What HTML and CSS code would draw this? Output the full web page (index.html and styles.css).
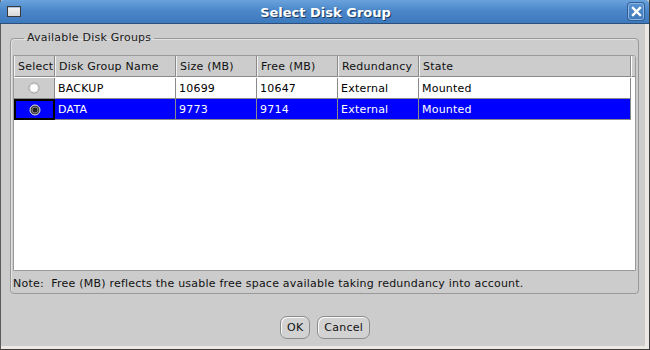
FILE: index.html
```html
<!DOCTYPE html>
<html lang="en">
<head>
  <meta charset="UTF-8">
  <title>Select Disk Group</title>
  <link rel="stylesheet" href="styles.css">
</head>
<body>

  <div class="window">
    <!-- title bar -->
    <div class="titlebar">
      <span class="win-icon"></span>
      <span class="title">Select Disk Group</span>
      <span class="close">
        <svg width="11" height="11" viewBox="0 0 11 11">
          <path d="M2 2 L9 9 M9 2 L2 9" stroke="#fff" stroke-width="2.4" stroke-linecap="square"/>
        </svg>
      </span>
    </div>

    <div class="content">
      <fieldset class="group">
        <legend>Available Disk Groups</legend>

        <div class="scroll">
          <div class="header">
            <table class="grid">
              <tr>
                <th class="c-sel">Select</th>
                <th class="c-name">Disk Group Name</th>
                <th class="c-num">Size (MB)</th>
                <th class="c-num">Free (MB)</th>
                <th class="c-num">Redundancy</th>
                <th class="c-state">State</th>
              </tr>
            </table>
            <div class="corner"></div>
          </div>
          <table class="grid rows">
            <tr>
              <td class="c-sel radio-cell">
                <svg width="12" height="12" viewBox="0 0 12 12">
                  <circle cx="6" cy="6" r="5" fill="#fff" stroke="#9a9a9a" stroke-width="1"/>
                  <circle cx="6" cy="6" r="4" fill="none" stroke="#e6e6e6" stroke-width="1"/>
                </svg>
              </td>
              <td class="c-name">BACKUP</td>
              <td class="c-num">10699</td>
              <td class="c-num">10647</td>
              <td class="c-num">External</td>
              <td class="c-state">Mounted</td>
            </tr>
            <tr class="selected">
              <td class="c-sel radio-cell focus">
                <svg width="12" height="12" viewBox="0 0 12 12">
                  <circle cx="6" cy="6" r="5" fill="#3a3a3a" stroke="#e8e8e8" stroke-width="1"/>
                  <circle cx="6" cy="6" r="3" fill="#222" stroke="#888" stroke-width="1"/>
                </svg>
              </td>
              <td class="c-name">DATA</td>
              <td class="c-num">9773</td>
              <td class="c-num">9714</td>
              <td class="c-num">External</td>
              <td class="c-state">Mounted</td>
            </tr>
          </table>
        </div>

        <div class="note">Note:&nbsp; Free (MB) reflects the usable free space available taking redundancy into account.</div>
      </fieldset>

      <div class="buttons">
        <button class="btn">OK</button>
        <button class="btn">Cancel</button>
      </div>
    </div>
  </div>

</body>
</html>
```

FILE: styles.css
```css
html, body {
  margin: 0;
  padding: 0;
  width: 650px;
  height: 350px;
  overflow: hidden;
  background: #cccccc;
  font-family: 'DejaVu Sans', sans-serif;
  font-size: 11px;
  letter-spacing: 0.22px;
  color: #000;
}

.window {
  width: 650px;
  height: 350px;
  box-sizing: border-box;
  display: flex;
  flex-direction: column;
  border-right: 1px solid #3c3c3c;
  border-bottom: 1px solid #3c3c3c;
  border-left: 1px solid #5a5a5a;
}

/* title bar */
.titlebar {
  height: 23px;
  flex: none;
  display: flex;
  align-items: center;
  position: relative;
  background: linear-gradient(to bottom, #6aa2dc 0%, #4b87c9 45%, #3d79bd 100%);
  border-bottom: 1px solid #2c4f7c;
  border-radius: 4px 4px 0 0;
  margin-left: -1px;
}

.win-icon {
  width: 12px;
  height: 9px;
  margin-left: 7px;
  background: linear-gradient(to bottom, #f4f4f4, #d8d8d8);
  border: 1px solid #3a3a3a;
  box-shadow: inset 0 1px 0 #a9c4e4;
}

.title {
  flex: 1;
  text-align: center;
  color: #fff;
  font-weight: bold;
  font-size: 13px;
  letter-spacing: 0;
  text-shadow: 1px 1px 0 #1f3b5e;
  padding-left: 2px;
  margin-top: 1px;
}

.close {
  width: 14px;
  height: 15px;
  margin-right: 5px;
  display: flex;
  align-items: center;
  justify-content: center;
  border: 1px solid #8fb4dd;
  border-radius: 3px;
  background: linear-gradient(to bottom, #5690cf, #3f79ba);
  box-shadow: 0 0 0 1px #2f5f98;
}

/* dialog content */
.content {
  flex: 1;
  display: flex;
  flex-direction: column;
  border-right: 4px solid #ece9e4;
  border-bottom: 3px solid #ece9e4;
}

.group {
  margin: 7px 6px 0 9px;
  padding: 10px 2px 2px 2px;
  border: 1px solid #999;
  border-radius: 4px;
  box-shadow: inset 1px 1px 0 #e2e2e2;
}

.group legend {
  padding: 0 3px;
  margin-left: 11px;
  line-height: 14px;
  color: #1a1a1a;
}

.scroll {
  height: 214px;
  background: #fff;
  border: 1px solid #9a9a9a;
  border-radius: 0 3px 0 0;
}

.header {
  display: flex;
  background: #cccccc;
}

.corner {
  flex: 1;
  border-bottom: 1px solid #8a8a8a;
  border-left: 1px solid #fff;
}

.grid {
  border-collapse: separate;
  border-spacing: 0;
  table-layout: fixed;
  width: 617px;
}

.grid th,
.grid td {
  box-sizing: border-box;
  height: 21px;
  padding: 0 0 0 3px;
  text-align: left;
  font-weight: normal;
  white-space: nowrap;
  overflow: hidden;
  border-right: 1px solid #8a8a8a;
  border-bottom: 1px solid #8a8a8a;
}

.grid th {
  background: #cccccc;
  border-left: 1px solid #f2f2f2;
  color: #111;
}

.c-sel { width: 41px; }
.c-name { width: 121px; }
.c-num { width: 81px; }
.c-state { width: 212px; }

.rows {
  margin-top: 1px;
}

.rows td {
  background: #fff;
}

.rows .radio-cell {
  background: #cccccc;
  padding: 0;
  text-align: center;
}

.radio-cell svg {
  display: block;
  margin: 0 auto;
}

.rows .selected td {
  background: #0000ff;
  color: #fff;
}

.rows .selected .focus {
  border: 2px solid #000;
}

.note {
  margin-top: 6px;
  line-height: 14px;
  padding-left: 0;
  color: #111;
}

.buttons {
  display: flex;
  justify-content: center;
  gap: 7px;
  margin-top: 22px;
  padding-left: 4px;
}

.btn {
  font-family: 'DejaVu Sans', sans-serif;
  font-size: 11px;
  letter-spacing: 0.22px;
  height: 23px;
  padding: 0 6px;
  color: #111;
  background: #d2d2d2;
  border: 1px solid #8c8c8c;
  border-radius: 7px;
  box-shadow: inset 1px 1px 0 #fafafa;
}
```
